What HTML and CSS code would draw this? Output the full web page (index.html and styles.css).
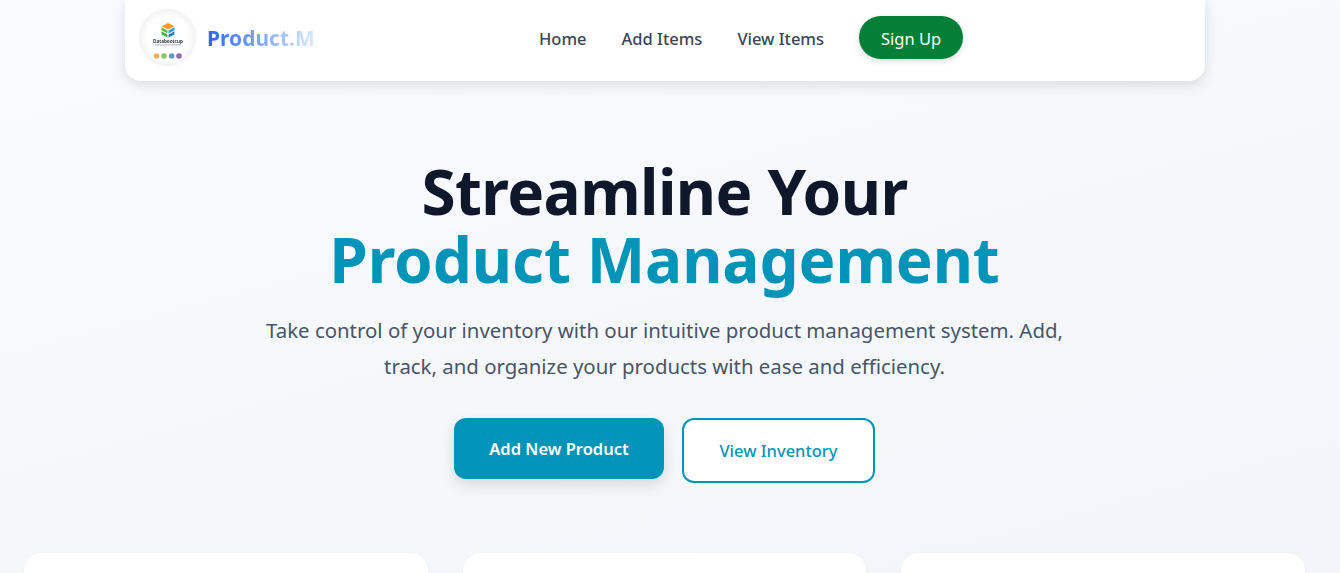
FILE: index.html
```html
<!DOCTYPE html>
<html lang="en">
<head>
<meta charset="utf-8">
<title>Product.M</title>
<link rel="stylesheet" href="styles.css">
</head>
<body>
<div class="page">
<header class="nav">
  <a class="brand" href="#">
    <span class="logo">
      <svg class="logo-art" width="53" height="53" viewBox="0 0 53 53" aria-hidden="true">
        <path d="M27 12L33.500 15.200L27 18.400L20.500 15.200Z" fill="#f39a2d"/>
        <path d="M20.500 16.200L26.500 19.400V22.400L20.500 19.200Z" fill="#58b947"/>
        <path d="M33.500 16.200L27.500 19.400V22.400L33.500 19.200Z" fill="#2f9fd8"/>
        <path d="M20.500 20.200L26.500 23.400V26.600L20.500 23.400Z" fill="#4caf50"/>
        <path d="M33.500 20.200L27.500 23.400V26.600L33.500 23.400Z" fill="#2b7fc4"/>
        <text x="27" y="32" text-anchor="middle" class="logo-word">Databootcup</text>
        <rect x="14" y="33.500" width="26" height="0.800" fill="#9aa3a8"/>
        <g class="logo-dots">
          <circle cx="15.500" cy="45" r="2.800" fill="#f2a33c"/>
          <circle cx="23" cy="45" r="2.800" fill="#7dbb4a"/>
          <circle cx="30.700" cy="45" r="2.800" fill="#4a86c5"/>
          <circle cx="38" cy="45" r="2.800" fill="#7f4fa3"/>
        </g>
      </svg>
    </span>
    <span class="brand-name">Product.M</span>
  </a>
  <nav class="links">
    <a class="link" href="#">Home</a>
    <a class="link" href="#">Add Items</a>
    <a class="link" href="#">View Items</a>
    <a class="signup" href="#">Sign Up</a>
  </nav>
</header>
<main class="hero">
  <h1>Streamline Your <span class="accent">Product Management</span></h1>
  <p>Take control of your inventory with our intuitive product management system. Add, track, and organize your products with ease and efficiency.</p>
  <div class="actions">
    <a class="btn primary" href="#">Add New Product</a>
    <a class="btn secondary" href="#">View Inventory</a>
  </div>
</main>
<section class="cards">
  <div class="card"></div>
  <div class="card"></div>
  <div class="card"></div>
</section>
</div>
</body>
</html>
```
FILE: styles.css
```css
* { box-sizing: border-box; }
html, body { height: 100%; }
body {
  margin: 0;
  height: 573px;
  overflow: hidden;
  font-family: "Noto Sans", "Open Sans", sans-serif;
  background: linear-gradient(165deg, #f9fbfe, #f2f5f9);
  color: #0f172a;
}
a { text-decoration: none; color: inherit; }
.page { width: 1329px; height: 573px; overflow: hidden; }
.nav {
  width: 1080px;
  height: 81px;
  margin: 0 0 0 125px;
  padding: 0 16px 6px;
  display: flex;
  align-items: center;
  background: #fff;
  border-radius: 0 0 16px 16px;
  box-shadow: 0 4px 14px rgba(0,0,0,.12);
}
.brand { display: flex; align-items: center; gap: 13px; width: 398px; }
.logo {
  width: 53px;
  height: 53px;
  border-radius: 50%;
  background: radial-gradient(circle, #fff 55%, #e6e6e6 100%);
  box-shadow: 0 0 4px rgba(0,0,0,.14);
  display: block;
  flex: none;
}
.logo-art { display: block; filter: blur(.5px); }
.logo-dots { opacity: .85; }
.logo-word { font-size: 4.600px; font-weight: 700; fill: #2f3a40; font-family: "Noto Sans", sans-serif; }
.brand-name {
  font-size: 21px;
  font-weight: 700;
  line-height: 26px;
  background: linear-gradient(90deg, #2468ff, #dbeafe);
  -webkit-background-clip: text;
  background-clip: text;
  color: transparent;
}
.links { display: flex; align-items: center; gap: 35px; font-size: 16.500px; font-weight: 500; color: #3b4658; }
.link { padding-top: 2px; }
.signup {
  background: #047f38;
  color: #fff;
  font-weight: 400;
  height: 43px;
  padding: 2px 22px 0;
  border-radius: 22px;
  display: flex;
  align-items: center;
  box-shadow: 0 2px 6px rgba(0,0,0,.15);
}
.hero { text-align: center; padding-top: 77px; }
h1 {
  margin: 0 auto;
  font-size: 62px;
  letter-spacing: -0.6px;
  line-height: 67.500px;
  font-weight: 700;
  color: #0f172a;
}
.accent { display: block; color: #0194b9; letter-spacing: -0.1px; }
.hero p {
  width: 820px;
  margin: 19px auto 0;
  font-size: 20.400px;
  line-height: 36px;
  color: #475569;
}
.actions { display: flex; justify-content: center; gap: 18px; margin-top: 34px; align-items: flex-start; }
.btn { display: flex; align-items: center; justify-content: center; font-size: 16.500px; }
.primary {
  width: 210px;
  height: 61px;
  background: #0194b9;
  color: #fff;
  font-weight: 600;
  border-radius: 12px;
  box-shadow: 0 6px 14px rgba(0,0,0,.12);
}
.secondary {
  width: 193px;
  height: 65px;
  background: #fff;
  color: #0194b9;
  font-weight: 500;
  border: 2px solid #0194b9;
  border-radius: 12px;
}
.cards {
  display: grid;
  grid-template-columns: repeat(3, 1fr);
  gap: 35px;
  padding: 0 24px;
  margin-top: 70px;
}
.card { height: 120px; background: #fff; border-radius: 18px; box-shadow: 0 1px 4px rgba(0,0,0,.03); }
```
